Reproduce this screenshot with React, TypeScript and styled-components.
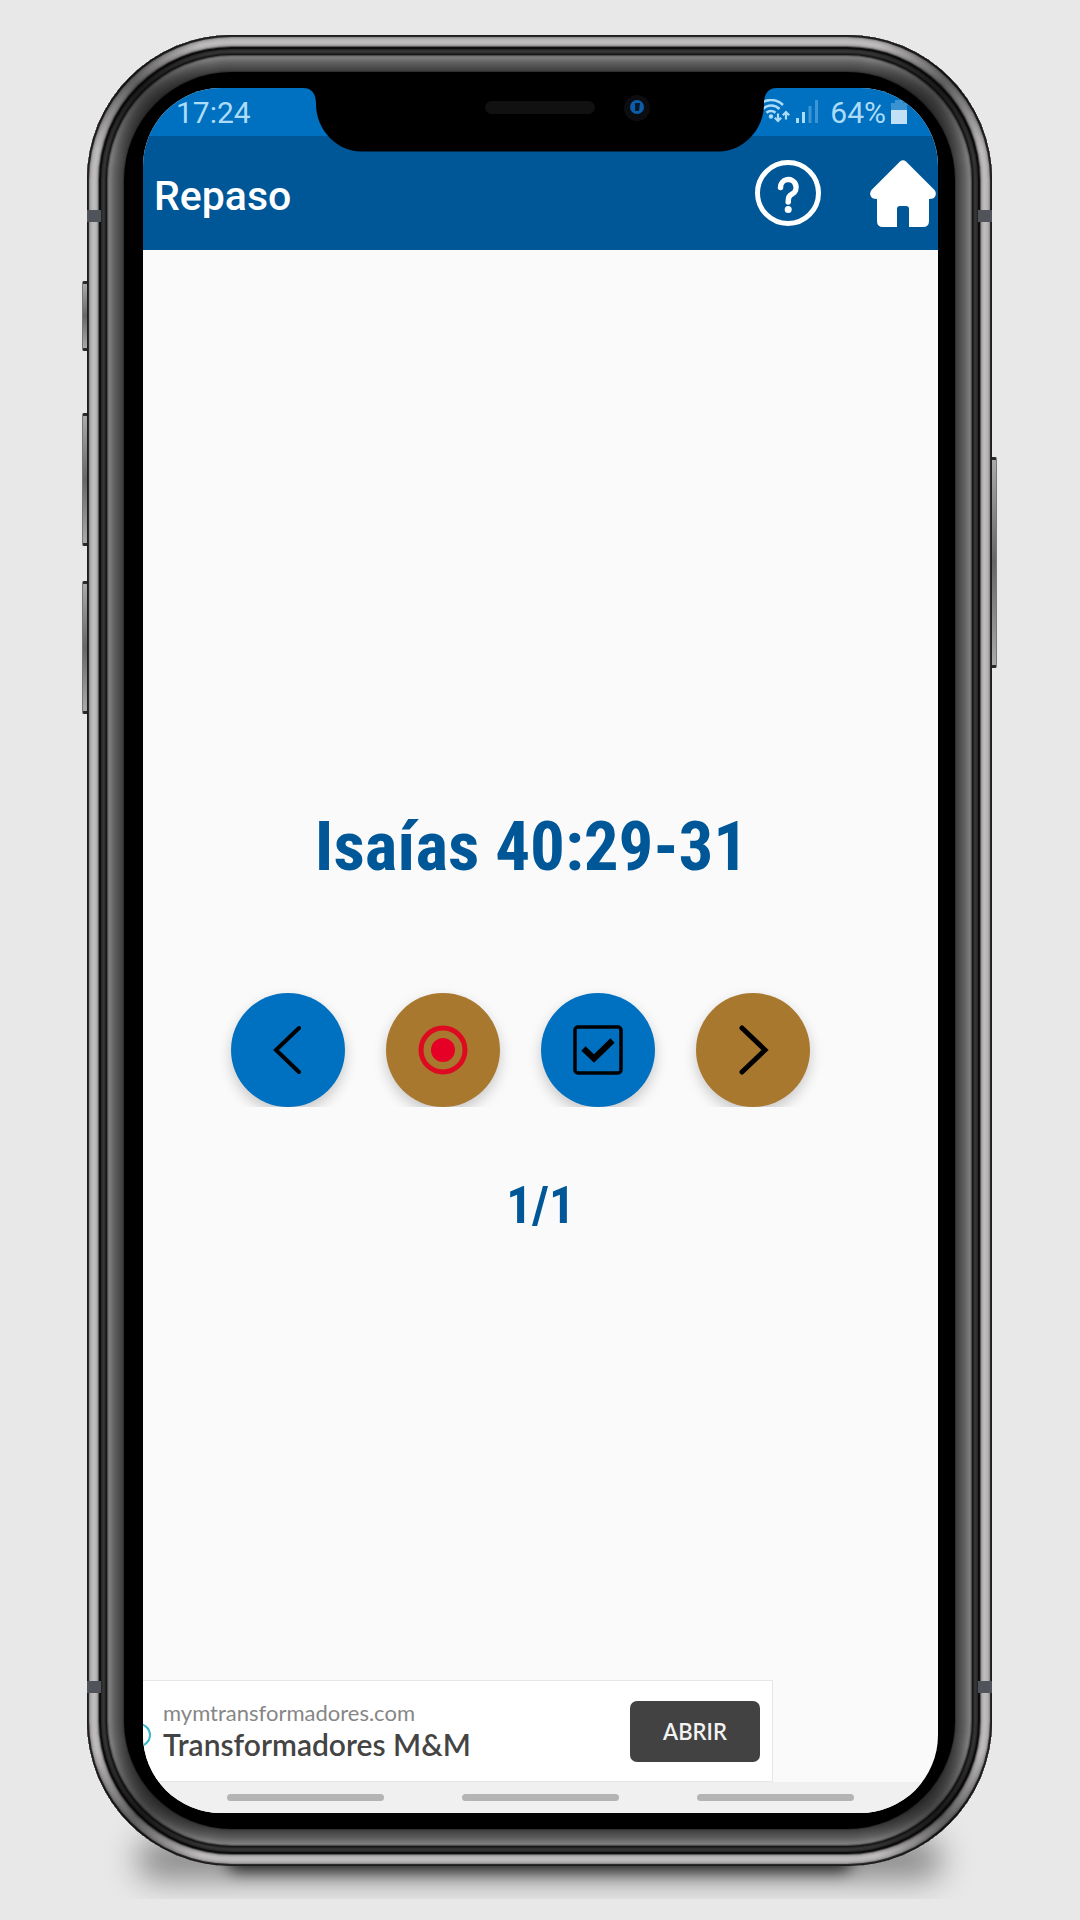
import React from "react";
import styled, { createGlobalStyle } from "styled-components";

const GlobalStyle = createGlobalStyle`
  *, *::before, *::after { box-sizing: border-box; }
  body {
    margin: 0;
    background: #e8e8e8;
    font-family: Roboto, "Liberation Sans", sans-serif;
  }
  button { font: inherit; border: 0; padding: 0; cursor: pointer; }
`;

/* Metal rim colours, one per pixel, from the outer edge inwards. */
const rim = [
  "#1c1c1c", "#2a2a2a", "#8f8d8e", "#a8a6a7", "#b4b1b2", "#bab7b8", "#bebbbc",
  "#bebbbc", "#bab7b8", "#b0adae", "#9a9899", "#5a5a5a", "#101010", "#0c0c0c",
  "#262626", "#303030", "#363636", "#303030", "#222222", "#161616", "#4c4c4c",
  "#707070", "#7c7c7c", "#787878", "#727272", "#6c6c6c", "#666666", "#616161",
  "#5c5c5c", "#585858", "#545454", "#505050", "#4c4c4c", "#484848", "#444444",
  "#404040", "#303030",
];
const rimShadow = rim.map((c, i) => `inset 0 0 0 ${i + 1}px ${c}`).join(",");

const cornerShade = ["50px 50px", "calc(100% - 50px) 50px", "50px calc(100% - 50px)", "calc(100% - 50px) calc(100% - 50px)"]
  .map((at) => `radial-gradient(circle 75px at ${at}, rgba(0, 0, 0, 0.5), transparent)`)
  .join(",");

const Page = styled.div`
  display: flex;
  flex-direction: column;
  min-height: 100vh;
  padding: 35px 88px 54px 87px;
`;

const Phone = styled.div`
  position: relative;
  display: flex;
  flex: 1;
`;

const GroundShadow = styled.div`
  position: absolute;
  left: 0;
  right: 0;
  bottom: -33px;
  height: 130px;
  overflow: hidden;

  &::before {
    content: "";
    position: absolute;
    inset: 70px 50px 20px;
    border-radius: 24px;
    background: rgba(0, 0, 0, 0.42);
    filter: blur(16px);
  }

  &::after {
    content: "";
    position: absolute;
    inset: 80px 140px 28px;
    border-radius: 20px;
    background: rgba(0, 0, 0, 0.8);
    filter: blur(8px);
  }
`;

const SideKey = styled.span<{ $side: "left" | "right"; $top: number; $height: number }>`
  position: absolute;
  ${(p) => p.$side}: -5px;
  top: ${(p) => p.$top}px;
  width: 8px;
  height: ${(p) => p.$height}px;
  border: 1px solid #777;
  border-top: 3px solid #2a2a2a;
  border-bottom: 3px solid #2a2a2a;
  border-radius: 2px;
  background: linear-gradient(#aaa, #666 50%, #aaa);
`;

const Frame = styled.div`
  position: relative;
  display: flex;
  flex: 1;
  padding: 53px 54px 53px 56px;
  border-radius: 145px;
  background: #000;
  box-shadow: ${rimShadow};

  &::before {
    content: "";
    position: absolute;
    inset: 0;
    border-radius: 145px;
    background: ${cornerShade};
  }
`;

const Antenna = styled.span<{ $side: "left" | "right"; $edge: "top" | "bottom" }>`
  position: absolute;
  ${(p) => p.$side}: 0;
  ${(p) => p.$edge}: ${(p) => (p.$edge === "top" ? 175 : 173)}px;
  width: 14px;
  height: 12px;
  background: #50535a;
`;

const Screen = styled.div`
  position: relative;
  display: flex;
  flex: 1;
  flex-direction: column;
  overflow: hidden;
  border-radius: 78px;
  background: #fafafa;
`;

const Notch = styled.svg`
  position: absolute;
  top: 0;
  left: 50%;
  margin-left: -238px;
  width: 474px;
  height: 64px;
`;

const StatusBar = styled.div`
  display: flex;
  align-items: center;
  height: 48px;
  padding: 2px 30px 0 33px;
  background: #0070c0;
  color: #acdcf8;
  font-size: 30px;
  line-height: 36px;
`;

const StatusIcons = styled.div`
  display: flex;
  align-items: center;
  margin-left: auto;
`;

const Percent = styled.span`
  margin: 0 4px 0 8px;
`;

const AppBar = styled.header`
  display: flex;
  align-items: center;
  height: 114px;
  padding: 0 2px 0 11px;
  background: #005798;
  color: #fff;
`;

const AppTitle = styled.h1`
  flex: 1;
  margin: 0;
  padding-top: 6px;
  font-size: 41px;
  font-weight: 500;
  line-height: 48px;
`;

const BarButton = styled.button`
  display: flex;
  margin-left: 48px;
  background: none;
  color: inherit;
`;

const Content = styled.main`
  display: flex;
  flex: 1;
  flex-direction: column;
  padding-top: 557px;
  color: #005798;
  font-family: "Roboto Condensed", Roboto, "Liberation Sans", sans-serif;
  font-weight: 700;
  text-align: center;
`;

const Verse = styled.h2`
  margin: 0;
  padding-right: 18px;
  font-size: 69px;
  line-height: 80px;
`;

const Controls = styled.div`
  display: flex;
  gap: 41px;
  margin-top: 86px;
  padding: 20px 0 0 88px;
  overflow: hidden;
`;

const RoundButton = styled.button<{ $tone: "blue" | "ochre" }>`
  display: flex;
  align-items: center;
  justify-content: center;
  width: 114px;
  height: 114px;
  border-radius: 50%;
  background: ${(p) => (p.$tone === "blue" ? "#0070c0" : "#a9782f")};
  color: #000;
  box-shadow: 0 6px 14px rgba(0, 0, 0, 0.2);
`;

const Counter = styled.p`
  margin: 69px 0 0;
  font-size: 51px;
  line-height: 60px;
`;

const Ad = styled.aside`
  display: flex;
  align-items: center;
  width: 630px;
  max-width: 100%;
  height: 102px;
  padding-right: 12px;
  border: 1px solid #e6e6e6;
  border-left: 0;
  background: #fff;
`;

const AdMark = styled.svg`
  width: 20px;
  height: 24px;
  margin-top: 8px;
`;

const AdText = styled.div`
  flex: 1;
  font-family: Lato, "Open Sans", sans-serif;
`;

const AdUrl = styled.div`
  color: #868686;
  font-size: 22px;
  line-height: 26px;
`;

const AdTitle = styled.div`
  color: #444;
  font-size: 30px;
  font-weight: 600;
  line-height: 36px;
`;

const AdButton = styled.button`
  width: 130px;
  height: 61px;
  border-radius: 7px;
  background: #424242;
  color: #f2f2f2;
  && {
    font-family: Lato, "Open Sans", sans-serif;
    font-size: 22px;
    font-weight: 600;
  }
`;

const NavBar = styled.nav`
  display: flex;
  align-items: center;
  justify-content: center;
  gap: 78px;
  height: 31px;
  padding-bottom: 1px;
  background: #f0f0f0;
`;

const NavPill = styled.button`
  width: 157px;
  height: 7px;
  border-radius: 4px;
  background: #b4b4b4;
`;

export default function App() {
  return (
    <>
      <GlobalStyle />
      <Page>
        <Phone>
          <GroundShadow />
          <SideKey $side="left" $top={246} $height={70} />
          <SideKey $side="left" $top={378} $height={133} />
          <SideKey $side="left" $top={546} $height={133} />
          <SideKey $side="right" $top={422} $height={211} />
          <Frame>
            <Antenna $side="left" $edge="top" />
            <Antenna $side="right" $edge="top" />
            <Antenna $side="left" $edge="bottom" />
            <Antenna $side="right" $edge="bottom" />
            <Screen>
              <StatusBar>
                <span>17:24</span>
                <StatusIcons>
                  <svg width="30" height="28" viewBox="0 0 30 28" fill="none" stroke="currentColor" strokeWidth="2.6">
                    <path d="M-1 6A17 17 0 0 1 23 6M3 10a11.500 11.500 0 0 1 16.500 0M6.500 13.800a6.500 6.500 0 0 1 9 0" />
                    <circle cx="11" cy="17.500" r="2.200" fill="currentColor" stroke="none" />
                    <path d="M18 14.500v7M14.800 18.800L18 22l3.200-3.200M26 20.500v-7M22.800 16.200L26 13l3.200 3.200" strokeWidth="2.200" />
                  </svg>
                  <svg width="32" height="28" viewBox="0 0 32 28" fill="currentColor">
                    <path d="M6 19h3v5H6zM12 13h3v11h-3z" />
                    <path d="M18.500 7h3v17h-3zM25 1h3v23h-3z" opacity=".35" />
                  </svg>
                  <Percent>64%</Percent>
                  <svg width="18" height="28" viewBox="0 0 18 28" fill="#c2e0f6">
                    <path d="M5 1h8v3h4v7H1V4h4z" opacity=".3" />
                    <path d="M1 11h16v14H1z" />
                  </svg>
                </StatusIcons>
              </StatusBar>
              <AppBar>
                <AppTitle>Repaso</AppTitle>
                <BarButton aria-label="Ayuda">
                  <svg width="68" height="68" viewBox="0 0 68 68" fill="none" stroke="currentColor" strokeWidth="5">
                    <circle cx="34" cy="34" r="30.500" />
                    <path d="M26.500 28.500a7.800 7.800 0 1 1 11.500 6.700c-3 1.600-3.800 3-3.800 7.800" strokeWidth="5.500" strokeLinecap="round" />
                    <circle cx="34.200" cy="50.500" r="3.500" fill="currentColor" stroke="none" />
                  </svg>
                </BarButton>
                <BarButton aria-label="Inicio">
                  <svg width="66" height="68" viewBox="0 0 66 68" fill="currentColor">
                    <path d="M30 2.500q3-2.500 6 0L64.500 31q2 2.500 1 5.500-1 3.500-6.500 3.500V62q0 6-6 6H39V50q0-3-3-3H30q-3 0-3 3v18H13q-6 0-6-6V40Q1.500 40 .5 36.500-.5 33.500 1.500 31z" />
                  </svg>
                </BarButton>
              </AppBar>
              <Content>
                <Verse>Isaías 40:29-31</Verse>
                <Controls>
                  <RoundButton $tone="blue" aria-label="Anterior">
                    <svg width="50" height="50" viewBox="0 0 50 50" fill="none" stroke="currentColor" strokeWidth="4" strokeLinecap="round">
                      <path d="M36 3L13 25l23 22" />
                    </svg>
                  </RoundButton>
                  <RoundButton $tone="ochre" aria-label="Grabar">
                    <svg width="50" height="50" viewBox="0 0 50 50" fill="none" stroke="#dd0a22" strokeWidth="5">
                      <circle cx="25" cy="25" r="22" />
                      <circle cx="25" cy="25" r="12" fill="#e60026" stroke="none" />
                    </svg>
                  </RoundButton>
                  <RoundButton $tone="blue" aria-label="Comprobar">
                    <svg width="50" height="50" viewBox="0 0 50 50" fill="none" stroke="currentColor">
                      <rect x="2" y="2" width="46" height="46" rx="3" strokeWidth="3.500" />
                      <path d="M10.500 23.500l10.500 10 18.500-18" strokeWidth="6" />
                    </svg>
                  </RoundButton>
                  <RoundButton $tone="ochre" aria-label="Siguiente">
                    <svg width="50" height="50" viewBox="0 0 50 50" fill="none" stroke="currentColor" strokeWidth="5" strokeLinecap="round">
                      <path d="M14 3L37 25 14 47" />
                    </svg>
                  </RoundButton>
                </Controls>
                <Counter>1/1</Counter>
              </Content>
              <Ad>
                <AdMark viewBox="0 0 20 24" fill="none" stroke="#35b8cc" strokeWidth="2">
                  <circle cx="-4" cy="12" r="11" />
                </AdMark>
                <AdText>
                  <AdUrl>mymtransformadores.com</AdUrl>
                  <AdTitle>Transformadores M&amp;M</AdTitle>
                </AdText>
                <AdButton>ABRIR</AdButton>
              </Ad>
              <NavBar>
                <NavPill aria-label="Recientes" />
                <NavPill aria-label="Pantalla de inicio" />
                <NavPill aria-label="Volver" />
              </NavBar>
              <Notch viewBox="0 0 474 64">
                <path d="M0 0C9 0 13 6 13 16C13 42 34 63.500 58 63.500H416C440 63.500 461 42 461 16C461 6 465 0 474 0Z" fill="#000" />
                <rect x="182" y="13" width="110" height="13" rx="6.500" fill="#111" />
                <circle cx="334" cy="20" r="13" fill="#0b0d10" />
                <circle cx="334" cy="19" r="7" fill="#0b5ea8" />
                <path d="M332 15h5l-1 8h-4z" fill="#06182c" />
              </Notch>
            </Screen>
          </Frame>
        </Phone>
      </Page>
    </>
  );
}
